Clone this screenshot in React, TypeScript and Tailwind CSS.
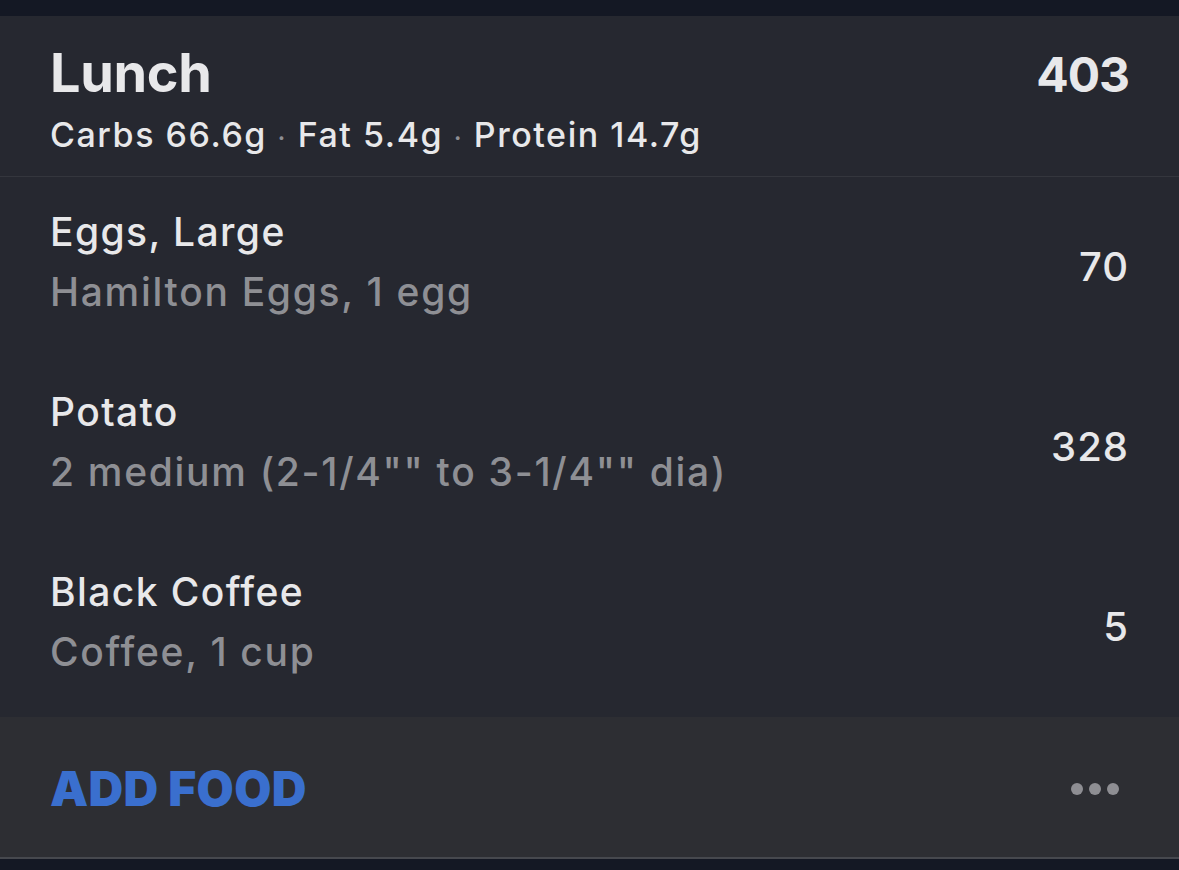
import React from "react";

const foods = [
  { name: "Eggs, Large", sub: "Hamilton Eggs, 1 egg", cal: "70" },
  { name: "Potato", sub: '2 medium (2-1/4"" to 3-1/4"" dia)', cal: "328" },
  { name: "Black Coffee", sub: "Coffee, 1 cup", cal: "5" },
];

export default function App() {
  return (
    <div
      className="w-[1179px] h-[870px] bg-[#141824] flex flex-col overflow-hidden"
      style={{ fontFamily: "Inter, 'Noto Sans', sans-serif" }}
    >
      <div className="h-[16px] shrink-0" />
      <div className="bg-[#262830] flex flex-col">
        <div className="h-[161px] flex justify-between px-[50px] pt-[27px] border-b border-[#34363d]">
          <div className="flex flex-col">
            <div className="text-[54px] leading-[60px] font-bold text-[#e8e8ea] tracking-[-0.3px]">Lunch</div>
            <div className="text-[34px] leading-[44px] font-medium text-[#e8e8ea] mt-[10px] tracking-[1.55px]">
              Carbs 66.6g <span className="text-[#8e8f94] text-[26px]">·</span> Fat 5.4g{" "}
              <span className="text-[#8e8f94] text-[26px]">·</span> Protein 14.7g
            </div>
          </div>
          <div className="text-[48px] leading-[60px] font-bold text-[#e8e8ea] mt-[2px] tracking-[-1px]">403</div>
        </div>
        {foods.map((f) => (
          <div key={f.name} className="h-[180px] flex items-center justify-between px-[50px]">
            <div className="flex flex-col mb-[10px]">
              <div className="text-[39px] leading-[60px] font-medium text-[#e8e8ea] tracking-[1.4px]">{f.name}</div>
              <div className="text-[39px] leading-[60px] font-medium text-[#8e8f94] tracking-[1.7px]">{f.sub}</div>
            </div>
            <div className="text-[40px] font-medium text-[#e8e8ea] tracking-[1px]">{f.cal}</div>
          </div>
        ))}
      </div>
      <div className="h-[142px] bg-[#2d2e33] flex items-center justify-between pl-[50px] pr-[60px] border-b-2 border-[#46484e]">
        <div className="text-[48px] font-black text-[#3a6fce] tracking-[0.3px] mt-[4px]">ADD FOOD</div>
        <div className="flex gap-[6px] mt-[4px]">
          <span className="w-[12px] h-[12px] rounded-full bg-[#8e8e93]" />
          <span className="w-[12px] h-[12px] rounded-full bg-[#8e8e93]" />
          <span className="w-[12px] h-[12px] rounded-full bg-[#8e8e93]" />
        </div>
      </div>
    </div>
  );
}
